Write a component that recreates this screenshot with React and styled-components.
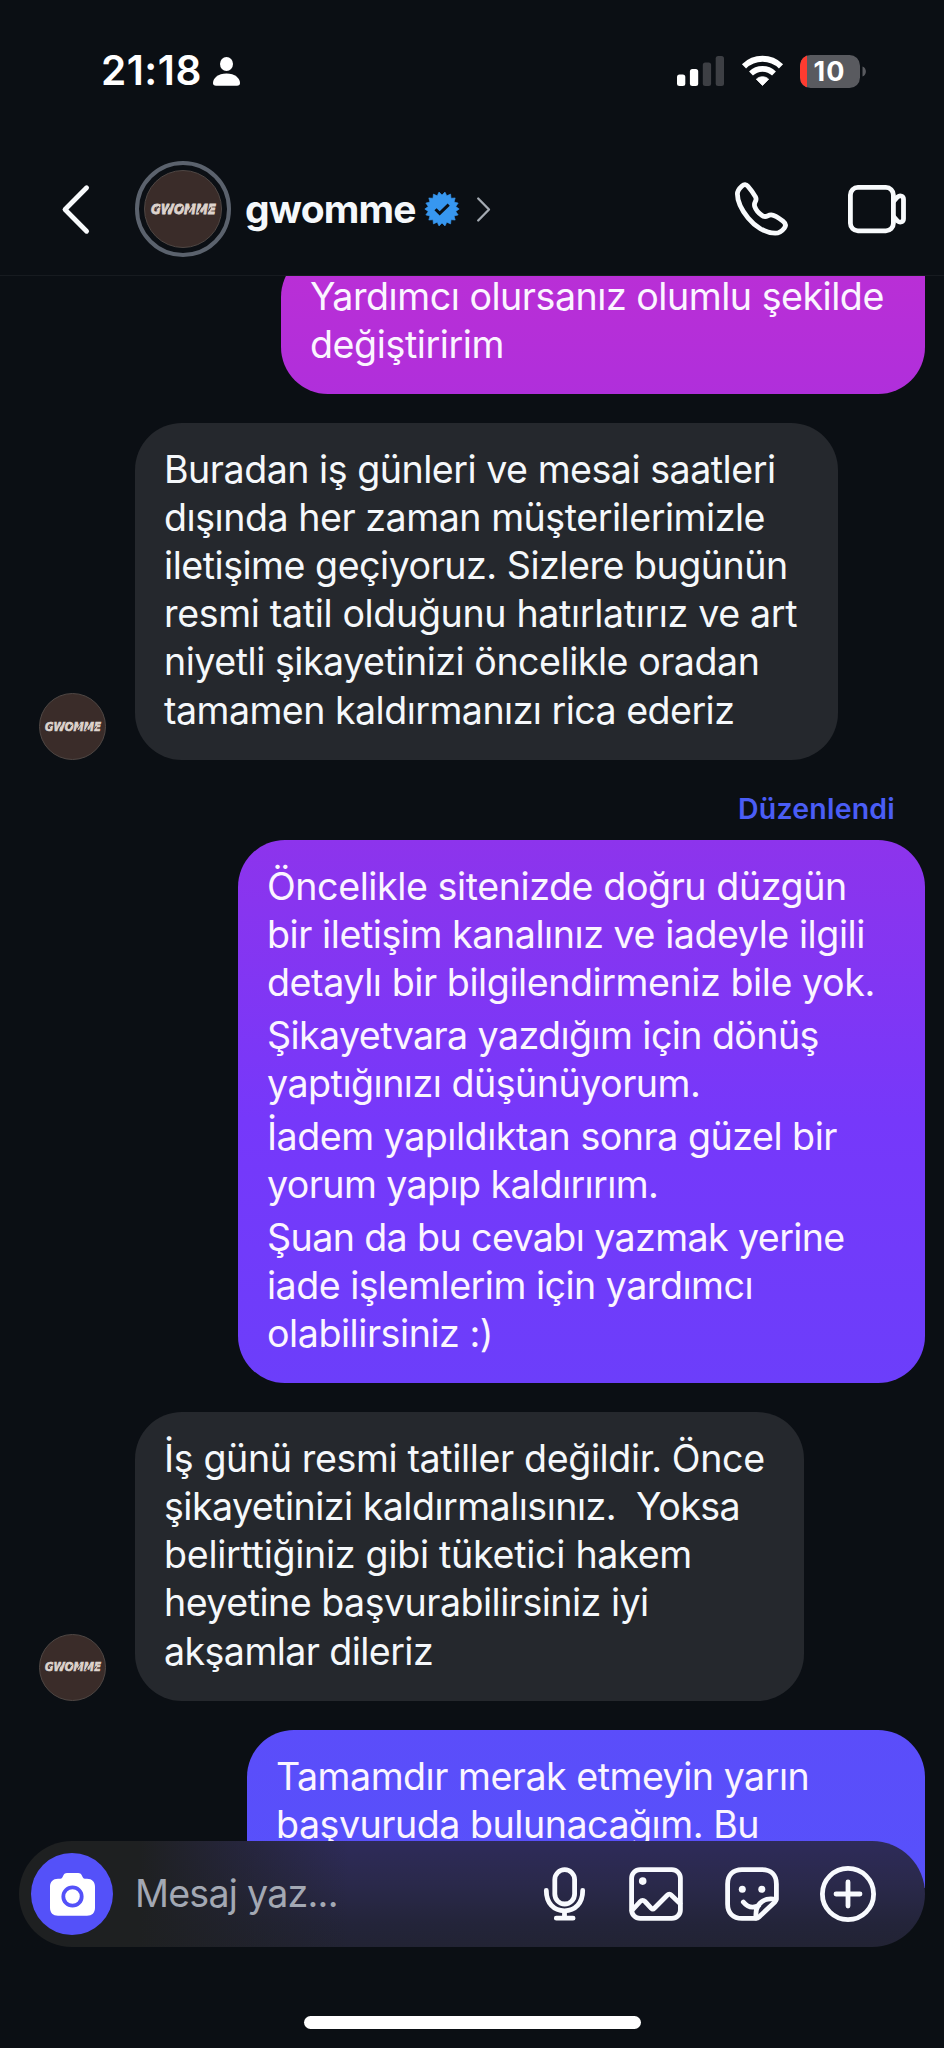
import React from "react";
import styled, { createGlobalStyle } from "styled-components";

const GlobalStyle = createGlobalStyle`
  * { box-sizing: border-box; }
  html, body { margin: 0; padding: 0; background: #0b0f14; }
  body { font-family: Inter, "Liberation Sans", sans-serif; color: #f5f8fb; }
`;

const Screen = styled.main`
  width: 944px;
  height: 2048px;
  display: flex;
  flex-direction: column;
  overflow: hidden;
  background: #0b0f14;
`;

const Icon = styled.svg`
  display: block;
  flex: none;
  overflow: visible;
`;

/* Status bar */
const StatusBar = styled.div`
  height: 143px;
  flex: none;
  display: flex;
  justify-content: space-between;
  align-items: center;
  padding: 0 78px 1px 101px;
`;

const StatusGroup = styled.div`
  display: flex;
  align-items: center;
  gap: ${(p) => p.$gap}px;
`;

const Clock = styled.span`
  font-size: 40.5px;
  font-weight: 600;
  line-height: 48px;
  letter-spacing: ${(p) => p.$tracking}px;
  color: #fff;
`;

/* Conversation header */
const Header = styled.header`
  height: 133px;
  flex: none;
  display: flex;
  align-items: center;
  padding: 0 38px 0 61px;
  border-bottom: 1px solid #171b20;
`;

const AvatarRing = styled.div`
  width: 96px;
  height: 96px;
  margin-left: 45px;
  flex: none;
  display: grid;
  place-items: center;
  border: 4px solid #5b626d;
  border-radius: 50%;
`;

const AvatarDisc = styled.div`
  width: ${(p) => p.$size}px;
  height: ${(p) => p.$size}px;
  flex: none;
  display: grid;
  place-items: center;
  border: 1px solid #4f4744;
  border-radius: 50%;
  background: #3a2c29;
`;

const Name = styled.h1`
  margin: 0 0 0 14px;
  font-size: 39px;
  font-weight: 650;
  line-height: 48px;
  letter-spacing: ${(p) => p.$tracking}px;
`;

const HeaderActions = styled.div`
  margin-left: auto;
  display: flex;
  align-items: center;
  gap: 60px;
`;

/* Messages */
const Thread = styled.section`
  height: 1612px;
  flex: none;
  overflow: hidden;
  padding: 0 19px 0 39px;
`;

const Row = styled.div`
  display: flex;
  align-items: flex-end;
  justify-content: ${(p) => (p.$mine ? "flex-end" : "flex-start")};
  gap: 29px;
  margin-top: ${(p) => p.$top ?? 29}px;
`;

const Bubble = styled.div`
  width: ${(p) => p.$width}px;
  padding: 22.8px 29px 25.1px;
  border-radius: 47px;
  font-size: 37.6px;
  line-height: 48.12px;
  white-space: pre;
`;

const TheirBubble = styled(Bubble)`
  background: #25282d;
`;

const MyBubble = styled(Bubble)`
  border-top-right-radius: ${(p) => (p.$grouped ? 10 : 47)}px;
  color: #fbf5ff;
  background: linear-gradient(
      180deg,
      #b92fd6 276px,
      #b02fdb 394px,
      #8d34ec 840px,
      #7638fa 1120px,
      #6c3efa 1382px,
      #5b4dfa 1729px,
      #5751fb 1889px
    ) fixed;
`;

const Paragraph = styled.p`
  margin: 0;
  & + & { margin-top: 4.6px; }
`;

const Line = styled.span`
  display: block;
  letter-spacing: ${(p) => p.$tracking}px;
`;

const Edited = styled.div`
  margin-top: 29px;
  padding-right: 30px;
  text-align: right;
  font-size: 28.5px;
  font-weight: 600;
  letter-spacing: 0.2px;
  line-height: 40px;
  height: 51.5px;
  color: #4a5df5;
`;

/* Composer */
const Footer = styled.footer`
  position: relative;
  z-index: 1;
  flex: 1;
  margin-top: -47px;
  padding: 0 19px 19px;
  display: flex;
  flex-direction: column;
  align-items: center;
  justify-content: space-between;
`;

const Composer = styled.div`
  width: 100%;
  height: 106px;
  display: flex;
  align-items: center;
  padding: 0 49px 0 12px;
  border-radius: 53px;
  background:
    linear-gradient(90deg, #1e2021 0, #1e2021 120px, rgba(30, 32, 33, 0) 330px),
    linear-gradient(180deg, #2e2b5a 0%, #2a294b 40%, #232439 80%, #222334 100%);
`;

const CameraButton = styled.button`
  width: 82px;
  height: 82px;
  padding: 0;
  border: 0;
  display: grid;
  place-items: center;
  border-radius: 50%;
  background: #5451f9;
`;

const Placeholder = styled.span`
  flex: 1;
  margin-left: 22px;
  font-size: 37.6px;
  line-height: 48px;
  letter-spacing: ${(p) => p.$tracking}px;
  color: #a3a8b3;
`;

const ComposerTools = styled.div`
  display: flex;
  align-items: center;
`;

const Tool = styled.div`
  margin-left: ${(p) => p.$gap}px;
`;

const HomeIndicator = styled.div`
  width: 337px;
  height: 13px;
  border-radius: 7px;
  background: #fff;
`;

const BrandMark = ({ width }) => (
  <Icon width={width} height={width * 0.17} viewBox="0 0 100 17">
    <text
      x="0"
      y="16.7"
      textLength="100"
      lengthAdjust="spacingAndGlyphs"
      fontFamily="'DejaVu Sans', sans-serif"
      fontWeight="700"
      fontStyle="italic"
      fontSize="23"
      fill="#ddd3cd"
      stroke="#ddd3cd"
      strokeWidth="1.300"
    >
      GWOMME
    </text>
    <path
      d="M6 12 12 5M23 15 30 3M42 12 48 5M56 15 63 4M72 15 79 4M88 13 92 7"
      stroke="#3a2c29"
      strokeWidth="1.600"
    />
  </Icon>
);

const PersonIcon = () => (
  <Icon width="27" height="29" viewBox="0 0 27 29" fill="#fff">
    <ellipse cx="13.5" cy="7" rx="6.5" ry="7" />
    <path d="M3 28.7C1 28.7 0 27.8 0 26 0 21.500 5 16.500 13.500 16.500S27 21.500 27 26c0 1.800-1 2.700-3 2.700Z" />
  </Icon>
);

const SignalIcon = () => (
  <Icon width="47" height="30" viewBox="0 0 47 30">
    <rect x="0" y="18.500" width="8.300" height="11.500" rx="2.500" fill="#fff" />
    <rect x="12.900" y="13" width="8.300" height="17" rx="2.500" fill="#fff" />
    <rect x="25.800" y="6.500" width="8.300" height="23.500" rx="2.500" fill="#3d3f44" />
    <rect x="38.700" y="0" width="8.300" height="30" rx="2.500" fill="#3d3f44" />
  </Icon>
);

const WifiIcon = () => (
  <Icon width="41" height="30" viewBox="0 0 41 30" fill="none" stroke="#fff">
    <path d="M2 10.300C12.500.300 28.500.300 39 10.300" strokeWidth="6" />
    <path d="M9 17.500C15.500 11.300 25.500 11.300 32 17.500" strokeWidth="5.600" />
    <path d="M14.300 23.200c3.600-3.300 8.800-3.300 12.400 0L20.500 29.500Z" fill="#fff" stroke="#fff" strokeWidth=".8" strokeLinejoin="round" />
  </Icon>
);

const BatteryIcon = () => (
  <Icon width="66" height="33" viewBox="0 0 66 33">
    <defs>
      <clipPath id="battery-shell">
        <rect width="60" height="33" rx="10.500" />
      </clipPath>
    </defs>
    <g clipPath="url(#battery-shell)">
      <rect width="60" height="33" fill="#595a5f" />
      <rect width="7" height="33" fill="#ff3b30" />
    </g>
    <path d="M62.500 11.500c4.500 1.500 4.500 8.500 0 10Z" fill="#595a5f" />
    <text x="29" y="26" textAnchor="middle" textLength="31" fontFamily="Inter, sans-serif" fontWeight="700" fontSize="27" fill="#fff">10</text>
  </Icon>
);

const BackIcon = () => (
  <Icon width="29" height="49" viewBox="0 0 29 49" fill="none" stroke="#f8fafc" strokeWidth="4.800" strokeLinecap="round" strokeLinejoin="round">
    <path d="M25.600 2.800 4 24.500 25.600 46.200" />
  </Icon>
);

const burst = Array.from({ length: 36 }, (_, i) => {
  const r = i % 2 ? 14 : 17.2;
  const a = (i * Math.PI) / 18 - Math.PI / 2 + Math.PI / 18;
  return `${(17 + r * Math.cos(a)).toFixed(2)},${(17 + r * Math.sin(a)).toFixed(2)}`;
}).join(" ");

const BadgeIcon = () => (
  <Icon width="34" height="34" viewBox="0 0 34 34">
    <polygon points={burst} fill="#3797f0" stroke="#3797f0" strokeWidth=".6" strokeLinejoin="round" />
    <path d="M10.500 17.200l4.200 4.200 9-8.800" fill="none" stroke="#0b0f14" strokeWidth="3" />
  </Icon>
);

const ForwardIcon = () => (
  <Icon width="13" height="25" viewBox="0 0 13 25" fill="none" stroke="#a4aab2" strokeWidth="2.300" strokeLinecap="round" strokeLinejoin="round">
    <path d="M1.200 1.500 12 12.500 1.200 23.500" />
  </Icon>
);

const PhoneIcon = () => (
  <Icon width="53" height="54" viewBox="735 182 53 54" fill="none" stroke="#f8fafc" strokeWidth="4.800" strokeLinejoin="round">
    <path d="M742 186c2-1.800 4.200-1.700 5.900.3 3.300 3.800 5.500 7 7.600 10.600 2.300 4.300-2.300 5-.8 9.500 1.500 4.300 4.100 6.800 7.400 9.100 4.500 3 5.200-.9 9.100-.7 4 .3 7.700 3.200 12 6.500 2.500 2 2.900 4.300 1.300 6.500-2.800 3.800-5.300 5.400-9.300 5.400-10 0-20.400-6.900-27.100-15.200-6.200-7.700-10.700-16.300-10.700-24 0-3.500 2.200-5.900 4.600-8Z" />
  </Icon>
);

const VideoIcon = () => (
  <Icon width="58" height="49" viewBox="848 185 58 49" fill="none" stroke="#f8fafc" strokeWidth="4.800" strokeLinejoin="round">
    <rect x="850.400" y="187.400" width="43" height="43.400" rx="7.500" />
    <path d="M893.500 201.500 897.500 197c2.800-2.300 6-.8 6 2.300v19.400c0 3.100-3.200 4.600-6 2.300l-4-4.500" />
  </Icon>
);

const CameraIcon = () => (
  <Icon width="45" height="43" viewBox="0 0 45 43">
    <path fill="#fff" d="M8 5.800h2.300C12 5.800 12.500 4 13.300 2.500 14.300.700 15.300 0 17 0h11.200c1.700 0 2.700.7 3.700 2.500.8 1.500 1.300 3.300 3 3.300H37c5 0 8 3 8 8v21c0 5-3 8-8 8H8c-5 0-8-3-8-8v-21c0-5 3-8 8-8Z" />
    <circle cx="22.500" cy="23.500" r="9.200" fill="#fff" stroke="#5451f9" strokeWidth="3.800" />
  </Icon>
);

const toolStroke = {
  fill: "none",
  stroke: "#f8fafe",
  strokeWidth: 4.8,
  strokeLinecap: "round",
  strokeLinejoin: "round",
};

const MicIcon = () => (
  <Icon width="41" height="54" viewBox="0 0 41 54" {...toolStroke}>
    <rect x="10.800" y="2.700" width="19.800" height="34.300" rx="9.900" />
    <path d="M2.300 23.500c0 12.800 7.500 20.300 18.200 20.300s18.200-7.500 18.200-20.300M20.500 44.500V51M12.300 51.200h16.800" />
  </Icon>
);

const GalleryIcon = () => (
  <Icon width="54" height="54" viewBox="0 0 54 54" {...toolStroke}>
    <rect x="2.600" y="2.600" width="48.800" height="48.800" rx="8.500" />
    <circle cx="13.700" cy="14.100" r="3.800" fill="#f8fafe" stroke="none" />
    <path d="M3 43.500 11.200 34.500c1.500-1.600 3.300-1.600 4.800 0l6.300 6.800c1 1 2 1 3 0L38.200 28.200c1.400-1.500 2.800-1.500 4.200 0L51 36.500" />
  </Icon>
);

const StickerIcon = () => (
  <Icon width="54" height="54" viewBox="0 0 54 54" {...toolStroke}>
    <path d="M31 51.400H17C8 51.400 2.600 46 2.600 37V17C2.600 8 8 2.600 17 2.600h20c9 0 14.400 5.400 14.400 14.400v14.500c0 1.500-.5 2.500-1.500 3.500L34 50c-1 1-1.700 1.400-3 1.400Z" />
    <path d="M31 51c-.5-6 .5-11 3.800-14.500S44 31 51 32.500M18.300 35c4 5 9.500 6.500 15.500 3.500" />
    <circle cx="17.300" cy="22.300" r="3.500" fill="#f8fafe" stroke="none" />
    <circle cx="36.800" cy="22.300" r="3.500" fill="#f8fafe" stroke="none" />
  </Icon>
);

const PlusIcon = () => (
  <Icon width="56" height="56" viewBox="0 0 56 56" {...toolStroke}>
    <circle cx="28" cy="28" r="25.600" />
    <path d="M28 16v24M16 28h24" />
  </Icon>
);

const Text = ({ paragraphs }) =>
  paragraphs.map((lines, i) => (
    <Paragraph key={i}>
      {lines.map(([text, tracking]) => (
        <Line key={text} $tracking={tracking}>{text}</Line>
      ))}
    </Paragraph>
  ));

/* Each line carries its own letter-spacing. */
const first = [[
  ["Yardımcı olursanız olumlu şekilde", -0.47],
  ["değiştiririm", -0.4],
]];

const second = [[
  ["Buradan iş günleri ve mesai saatleri", -0.48],
  ["dışında her zaman müşterilerimizle", -0.46],
  ["iletişime geçiyoruz. Sizlere bugünün", -0.475],
  ["resmi tatil olduğunu hatırlatırız ve art", -0.34],
  ["niyetli şikayetinizi öncelikle oradan", -0.47],
  ["tamamen kaldırmanızı rica ederiz", -0.53],
]];

const third = [
  [
    ["Öncelikle sitenizde doğru düzgün", -0.41],
    ["bir iletişim kanalınız ve iadeyle ilgili", -0.435],
    ["detaylı bir bilgilendirmeniz bile yok.", -0.42],
  ],
  [
    ["Şikayetvara yazdığım için dönüş", -0.58],
    ["yaptığınızı düşünüyorum.", -0.49],
  ],
  [
    ["İadem yapıldıktan sonra güzel bir", -0.475],
    ["yorum yapıp kaldırırım.", -0.59],
  ],
  [
    ["Şuan da bu cevabı yazmak yerine", -0.6],
    ["iade işlemlerim için yardımcı", -0.5],
    ["olabilirsiniz :)", -0.45],
  ],
];

const fourth = [[
  ["İş günü resmi tatiller değildir. Önce", -0.365],
  ["şikayetinizi kaldırmalısınız.  Yoksa", -0.525],
  ["belirttiğiniz gibi tüketici hakem", -0.27],
  ["heyetine başvurabilirsiniz iyi", -0.51],
  ["akşamlar dileriz", -0.57],
]];

const fifth = [[
  ["Tamamdır merak etmeyin yarın", -0.49],
  ["başvuruda bulunacağım. Bu", -0.47],
]];

const SmallAvatar = () => (
  <AvatarDisc $size={67}>
    <BrandMark width={56} />
  </AvatarDisc>
);

export default function App() {
  return (
    <Screen>
      <GlobalStyle />
      <StatusBar>
        <StatusGroup $gap={11}>
          <Clock $tracking={0.5}>21:18</Clock>
          <PersonIcon />
        </StatusGroup>
        <StatusGroup $gap={17.5}>
          <SignalIcon />
          <WifiIcon />
          <BatteryIcon />
        </StatusGroup>
      </StatusBar>

      <Header>
        <BackIcon />
        <AvatarRing>
          <AvatarDisc $size={78}>
            <BrandMark width={65} />
          </AvatarDisc>
        </AvatarRing>
        <StatusGroup $gap={9}>
          <Name $tracking={-0.8}>gwomme</Name>
          <BadgeIcon />
        </StatusGroup>
        <Tool $gap={18}><ForwardIcon /></Tool>
        <HeaderActions>
          <PhoneIcon />
          <VideoIcon />
        </HeaderActions>
      </Header>

      <Thread>
        <Row $mine $top={-26}>
          <MyBubble $width={644} $grouped><Text paragraphs={first} /></MyBubble>
        </Row>
        <Row>
          <SmallAvatar />
          <TheirBubble $width={703}><Text paragraphs={second} /></TheirBubble>
        </Row>
        <Edited>Düzenlendi</Edited>
        <Row $mine $top={0}>
          <MyBubble $width={687}><Text paragraphs={third} /></MyBubble>
        </Row>
        <Row>
          <SmallAvatar />
          <TheirBubble $width={669}><Text paragraphs={fourth} /></TheirBubble>
        </Row>
        <Row $mine>
          <MyBubble $width={678}>
            <Text paragraphs={fifth} />
            <Line>{" "}</Line>
            <Line>{" "}</Line>
          </MyBubble>
        </Row>
      </Thread>

      <Footer>
        <Composer>
          <CameraButton><CameraIcon /></CameraButton>
          <Placeholder $tracking={-0.75}>Mesaj yaz...</Placeholder>
          <ComposerTools>
            <Tool $gap={0}><MicIcon /></Tool>
            <Tool $gap={44}><GalleryIcon /></Tool>
            <Tool $gap={42}><StickerIcon /></Tool>
            <Tool $gap={41}><PlusIcon /></Tool>
          </ComposerTools>
        </Composer>
        <HomeIndicator />
      </Footer>
    </Screen>
  );
}
